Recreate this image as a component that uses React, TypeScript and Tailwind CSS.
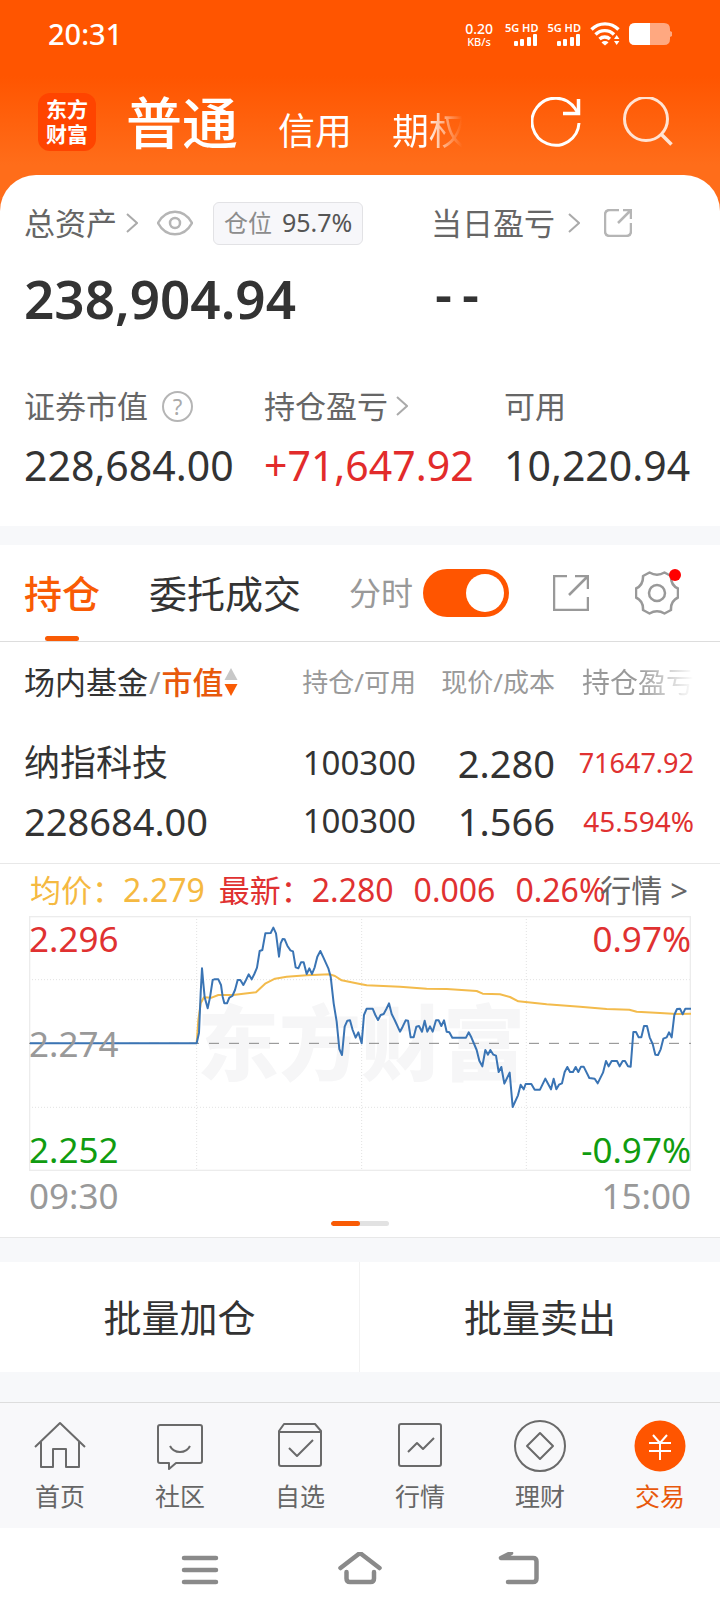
import React, { useState } from "react";

const pricePoints =
  "3,382 503,382 510,350 515,232 519,157 523,202 527,244 536,277 543,244 551,192 556,190 568,190 576,207 581,242 586,262 594,262 601,245 610,240 618,222 626,192 634,192 643,207 651,192 659,175 668,190 676,174 684,155 692,105 700,102 709,52 725,51 733,35 741,52 750,122 755,82 761,69 767,70 775,89 784,103 792,106 800,154 808,157 816,139 824,139 833,174 841,157 849,174 857,154 865,122 874,105 882,122 898,157 905,182 914,262 923,317 931,399 939,417 947,332 955,314 963,313 971,342 980,365 988,349 998,382 1005,297 1013,278 1031,278 1039,297 1047,312 1055,297 1064,294 1072,279 1080,262 1088,294 1097,312 1113,347 1121,332 1130,313 1137,314 1145,364 1154,364 1162,332 1170,330 1179,347 1187,314 1195,347 1203,331 1211,347 1221,313 1229,313 1237,330 1245,313 1253,347 1261,349 1270,365 1311,365 1319,349 1327,364 1343,402 1351,434 1360,451 1369,402 1377,416 1384,402 1393,416 1401,419 1409,468 1417,453 1426,503 1442,470 1451,573 1467,538 1475,506 1484,520 1490,504 1507,504 1517,521 1533,521 1549,488 1566,520 1574,488 1582,520 1590,506 1599,502 1607,468 1615,453 1623,468 1632,468 1640,453 1648,468 1656,452 1664,452 1681,486 1697,488 1706,502 1722,470 1731,435 1739,451 1748,435 1764,435 1772,451 1781,435 1788,435 1797,451 1805,452 1813,348 1821,348 1829,364 1837,364 1845,330 1854,330 1862,364 1871,384 1879,416 1887,417 1895,400 1903,368 1913,364 1920,349 1928,364 1936,297 1944,279 1953,278 1961,295 1969,278 1986,278";

const averagePoints =
  "503,382 508,312 515,262 525,244 548,245 568,237 613,237 643,233 681,229 710,202 738,188 773,182 833,178 903,175 918,180 938,193 993,204 1013,208 1113,212 1193,218 1253,219 1343,225 1361,233 1413,235 1443,243 1468,256 1553,265 1653,272 1733,279 1801,281 1823,287 1893,291 1943,294 1986,293";

const Chevron = () => (
  <svg viewBox="0 0 12 20" className="w-3 h-5 shrink-0" fill="none" stroke="#aaa" strokeWidth="2">
    <path d="M1 1l10 9-10 9" />
  </svg>
);

const Signal = () => (
  <div className="flex flex-col items-end">
    <span className="text-[11px] leading-[12px] font-semibold">5G HD</span>
    <svg viewBox="0 0 24 12" className="w-6 h-3" fill="#fff">
      <rect x="0" y="7" width="4" height="5" rx="1" />
      <rect x="6" y="5" width="4" height="7" rx="1" />
      <rect x="13" y="3" width="4" height="9" rx="1" />
      <rect x="19" y="0" width="4" height="12" rx="1" />
    </svg>
  </div>
);

const StatusBar = () => (
  <div className="flex items-center justify-between h-[68px] pl-12 pr-12 text-white">
    <span className="text-[29px] leading-8 font-medium">20:31</span>
    <div className="flex items-center gap-[9px]">
      <div className="flex flex-col items-center mr-[3px] font-medium">
        <span className="text-[14px] leading-[15px]">0.20</span>
        <span className="text-[11px] leading-[12px]">KB/s</span>
      </div>
      <Signal />
      <Signal />
      <svg viewBox="0 0 30 24" className="w-[30px] h-6" fill="none" stroke="#fff" strokeWidth="3.4">
        <path d="M1.5 7.5a19 19 0 0 1 27 0" />
        <path d="M5.5 12.5a13 13 0 0 1 18.5 0" />
        <path d="M9.5 17a8 8 0 0 1 10.5 0" />
        <path d="M11.5 20.5l3.5 3 3.5-3a5 5 0 0 0-7 0z" fill="#fff" stroke="none" />
        <path d="M24 17l2.700-4 2.700 4zM24 19l2.700 4 2.700-4z" fill="#fff" stroke="none" />
      </svg>
      <svg viewBox="0 0 43 22" className="w-[43px] h-[22px]">
        <path d="M6 0h29q6 0 6 6v2l2 1v4l-2 1v2q0 6-6 6H6q-6 0-6-6V6q0-6 6-6z" fill="#ffa880" />
        <path d="M6 0h15v22H6q-6 0-6-6V6q0-6 6-6z" fill="#fff" />
      </svg>
    </div>
  </div>
);

const Header = () => (
  <header className="flex items-center justify-between h-[107px] pl-[38px] pr-[47px] text-white">
    <div className="flex items-center">
      <div className="flex items-center justify-center size-[58px] rounded-xl bg-[#ff4400] text-[21px] leading-[25px] font-bold">
        东方
        <br />
        财富
      </div>
      <nav className="flex items-end ml-[30px]">
        <a href="#" className="text-[56px] leading-[64px] font-medium">普通</a>
        <a href="#" className="ml-10 text-[37px] leading-[46px]">信用</a>
        <a href="#" className="ml-10 text-[37px] leading-[46px] text-transparent bg-clip-text bg-linear-to-r from-white from-45% to-transparent to-95%">
          期权
        </a>
      </nav>
    </div>
    <div className="flex items-center gap-[42px]">
      <button aria-label="刷新">
        <svg viewBox="0 0 50 50" className="size-[50px]" fill="none" stroke="#fff" strokeWidth="3">
          <path d="M48 26A23.500 23.500 0 1 1 44 11.500l3.500 5.500" />
          <path d="M32 16.500h15.500V2" strokeWidth="3.500" />
        </svg>
      </button>
      <button aria-label="搜索">
        <svg viewBox="0 0 50 50" className="size-[50px]" fill="none" stroke="#ffe3d3" strokeWidth="3">
          <circle cx="23" cy="22" r="21.500" />
          <path d="M38 37l10.500 10.500" strokeWidth="3.500" />
        </svg>
      </button>
    </div>
  </header>
);

const Summary = () => (
  <section className="pb-[35px]">
    <div className="grid grid-cols-[431fr_289fr] pt-[25px]">
      <div className="flex items-center pl-6 h-[46px]">
        <a href="#" className="flex items-center gap-[9px] text-[31px] text-[#666]">
          总资产 <Chevron />
        </a>
        <button aria-label="隐藏金额" className="ml-[19px]">
          <svg viewBox="0 0 36 26" className="w-9 h-[26px]" fill="none" stroke="#b5b5b5" strokeWidth="2.500">
            <path d="M1 13C9-2 27-2 35 13 27 28 9 28 1 13z" />
            <circle cx="18" cy="13" r="5" />
          </svg>
        </button>
        <div className="flex items-center gap-[10px] h-[43px] ml-5 px-[10px] border border-[#e2e2e5] rounded-md bg-[#f7f7fa] text-[24px] whitespace-nowrap">
          <span className="text-[#8c8c8c]">仓位</span>
          <span className="text-[25px] text-[#555]">95.7%</span>
        </div>
      </div>
      <div className="flex items-center h-[46px]">
        <a href="#" className="flex items-center gap-[13px] text-[31px] text-[#666]">
          当日盈亏 <Chevron />
        </a>
        <button aria-label="分享" className="ml-6">
          <svg viewBox="0 0 28 28" className="size-7" fill="none" stroke="#b5b5b5" strokeWidth="2.500">
            <path d="M15 1H6Q1 1 1 6v16q0 5 5 5h16q5 0 5-5v-8" />
            <path d="M14 14L27 1M19 1h8v9" />
          </svg>
        </button>
      </div>
      <p className="pl-6 pt-[26px] text-[53px] leading-[54px] font-semibold text-[#333]">238,904.94</p>
      <p className="flex gap-[10px] pt-5 pl-1 text-[53px] leading-[54px] font-semibold text-[#333]">
        <span>-</span>
        <span>-</span>
      </p>
    </div>
    <div className="grid grid-cols-3 pt-[55px] text-[31px] leading-[50px] text-[#666]">
      <div className="flex items-center gap-[14px] pl-6">
        证券市值
        <button aria-label="说明" className="flex items-center justify-center size-[31px] border-2 border-[#b5b5b5] rounded-full text-[22px] leading-none text-[#aaa]">
          ?
        </button>
      </div>
      <a href="#" className="flex items-center gap-[8px] pl-6">
        持仓盈亏 <Chevron />
      </a>
      <div className="pl-6">可用</div>
    </div>
    <div className="grid grid-cols-3 pt-2 text-[41px] leading-[52px] text-[#333]">
      <span className="pl-6">228,684.00</span>
      <span className="pl-6 text-[#e22b2b]">+71,647.92</span>
      <span className="pl-6">10,220.94</span>
    </div>
  </section>
);

const PositionTabs = () => {
  const [minute, setMinute] = useState(true);

  return (
    <div className="flex items-stretch justify-between h-[97px] pl-6 pr-[41px] border-b border-[#ddd]">
      <div className="flex gap-[49px] text-[38px]">
        <button className="relative font-medium text-[#f95b05]">
          持仓
          <span className="absolute bottom-0 left-1/2 w-[34px] h-[5px] -translate-x-1/2 rounded-full bg-[#f95b05]" />
        </button>
        <button className="text-[#333]">委托成交</button>
      </div>
      <div className="flex items-center">
        <label className="flex items-center gap-[10px] text-[32px] text-[#999]">
          分时
          <input
            type="checkbox"
            checked={minute}
            onChange={(e) => setMinute(e.target.checked)}
            className="appearance-none w-[86px] h-12 p-[5px] rounded-full bg-[#ccc] checked:bg-[#ff5500] before:block before:size-[38px] before:rounded-full before:bg-white checked:before:ml-[38px]"
          />
        </label>
        <button aria-label="导出" className="ml-11">
          <svg viewBox="0 0 36 36" className="size-9" fill="none" stroke="#999" strokeWidth="2.500">
            <path d="M14 1H1v34h34V22" />
            <path d="M16 20L35 1M22 1h13v13" />
          </svg>
        </button>
        <button aria-label="设置" className="relative ml-[46px]">
          <svg viewBox="0 0 44 44" className="size-11" fill="none" stroke="#999" strokeWidth="2.500" strokeLinejoin="round">
            <path d="M14.500 1.500q7.500 4.500 15 0l6.500 3.500q-.500 9 7 12.500v9q-7.500 3.500-7 12.500l-6.500 3.500q-7.500-4.500-15 0L8 39q.500-9-7-12.500v-9Q8.500 14 8 5z" />
            <circle cx="22" cy="22" r="8" />
          </svg>
          <span className="absolute -top-[2px] -right-[2px] size-3 rounded-full bg-[#ff0000]" />
        </button>
      </div>
    </div>
  );
};

const Holdings = () => (
  <table className="w-full table-fixed border-b border-[#e8e8e8] text-right whitespace-nowrap text-[#333]">
    <colgroup>
      <col />
      <col className="w-[139px]" />
      <col className="w-[139px]" />
      <col className="w-[165px]" />
    </colgroup>
    <thead>
      <tr className="h-20 text-[26px] text-[#999]">
        <th className="pl-6 text-left font-normal">
          <button className="flex items-center text-[31px] leading-10 text-[#333]">
            场内基金<span className="px-px text-[#999]">/</span>
            <span className="font-medium text-[#e8590c]">市值</span>
            <svg viewBox="0 0 14 28" className="w-[14px] h-7">
              <path d="M7 0l6.500 12H.500z" fill="#c8c8c8" />
              <path d="M7 28l6.500-12H.500z" fill="#f95b05" />
            </svg>
          </button>
        </th>
        <th className="font-normal">持仓/可用</th>
        <th className="font-normal">现价/成本</th>
        <th className="pr-[26px] font-normal">
          <span className="text-[28px] text-transparent bg-clip-text bg-linear-to-r from-[#999] from-50% to-transparent">
            持仓盈亏
          </span>
        </th>
      </tr>
    </thead>
    <tbody>
      <tr>
        <td className="pl-6 pt-3 pb-[13px] text-left">
          <p className="text-[36px] leading-[58px]">纳指科技</p>
          <p className="text-[38px] leading-[58px]">228684.00</p>
        </td>
        <td className="pt-3 pb-[13px] text-[33px] leading-[58px]">
          <p>100300</p>
          <p>100300</p>
        </td>
        <td className="pt-3 pb-[13px] text-[38px] leading-[58px]">
          <p>2.280</p>
          <p>1.566</p>
        </td>
        <td className="pt-3 pb-[13px] pr-[26px] text-[27px] leading-[58px] text-[#e03131]">
          <p>71647.92</p>
          <p className="text-[28px] leading-[58px]">45.594%</p>
        </td>
      </tr>
    </tbody>
  </table>
);

const Chart = () => (
  <section className="pb-[11px] border-b border-[#e8e8e8]">
    <div className="relative flex items-center h-[52px] pl-[30px] text-[32px] whitespace-nowrap">
      <span className="text-[#f5b941]">
        <span className="text-[31px]">均价：</span>2.279
      </span>
      <span className="flex items-center ml-[14px] text-[#e03131]">
        <span className="text-[31px]">最新：</span>2.280
        <span className="ml-5">0.006</span>
        <span className="ml-5">0.26%</span>
      </span>
      <a href="#" className="absolute right-8 text-[31px] text-[#666]">行情 &gt;</a>
    </div>
    <div className="relative mx-[29px] text-[35px] leading-[34px]">
      <svg viewBox="0 0 1986 765" className="block w-full" fill="none">
        <text x="996" y="475" textAnchor="middle" fill="#f6f6f7" fontSize="246" fontWeight="900">
          东方财富
        </text>
        <path d="M0 191h1986M0 574h1986M503 0v765M998 0v765M1492 0v765" stroke="#e2e2e2" strokeWidth="3" strokeDasharray="3 6" />
        <rect x="2" y="2" width="1982" height="761" stroke="#ececec" strokeWidth="4" />
        <path d="M0 382h1986" stroke="#888" strokeWidth="3" strokeDasharray="30 30" />
        <polyline points={averagePoints} stroke="#f3bb4c" strokeWidth="6" strokeLinejoin="round" />
        <polyline points={pricePoints} stroke="#3a74b4" strokeWidth="6" strokeLinejoin="round" />
      </svg>
      <span className="absolute left-0 top-[6px] text-[#e03131]">2.296</span>
      <span className="absolute left-0 top-1/2 -translate-y-1/2 text-[#999]">2.274</span>
      <span className="absolute left-0 bottom-1 text-[#109c10]">2.252</span>
      <span className="absolute right-0 top-[6px] text-[#e03131]">0.97%</span>
      <span className="absolute right-0 bottom-1 text-[#109c10]">-0.97%</span>
    </div>
    <div className="flex justify-between mx-[29px] pt-[2px] pb-[2px] text-[35px] leading-[46px] text-[#999]">
      <span>09:30</span>
      <span>15:00</span>
    </div>
    <div className="flex w-[58px] h-[5px] mx-auto rounded-full overflow-hidden bg-[#e2e2e2]">
      <span className="w-1/2 rounded-full bg-[#f95b05]" />
    </div>
  </section>
);

const tabs = [
  {
    label: "首页",
    icon: (
      <>
        <path d="M1 26L26 2l25 24" />
        <path d="M7 21v25h12V28h13v18h13V21" />
      </>
    ),
  },
  {
    label: "社区",
    icon: (
      <>
        <path d="M6 4h40q2 0 2 2v34q0 2-2 2H22l-7 6v-6H6q-2 0-2-2V6q0-2 2-2z" />
        <path d="M16 25q3 6 10 6t10-6" />
      </>
    ),
  },
  {
    label: "自选",
    icon: (
      <>
        <path d="M5 10l5-7h31l6 7v33q0 2-2 2H7q-2 0-2-2zM5 11h42" />
        <path d="M15 27l8 8 16-16" />
      </>
    ),
  },
  {
    label: "行情",
    icon: (
      <>
        <rect x="5" y="3" width="42" height="42" rx="2" />
        <path d="M14 31l9-9 6 6 11-11" />
      </>
    ),
  },
  {
    label: "理财",
    icon: (
      <>
        <circle cx="26" cy="25" r="25" />
        <path d="M26 12l13 13-13 13-13-13z" />
      </>
    ),
  },
  {
    label: "交易",
    active: true,
    icon: (
      <>
        <circle cx="26" cy="25" r="25.500" fill="#ff5500" stroke="none" />
        <path d="M19 14l7 8 7-8M15 22h22M15 30h22M26 22v17" stroke="#fff" />
      </>
    ),
  },
];

const TabBar = () => (
  <nav className="grid grid-cols-6 h-[126px] pt-[17px] border-t border-[#ddd] bg-[#f8f8fa]">
    {tabs.map((tab) => (
      <a
        key={tab.label}
        href="#"
        className={`flex flex-col items-center text-[25px] leading-9 ${tab.active ? "text-[#e8590c]" : "text-[#666]"}`}
      >
        <svg viewBox="-1 -1 54 52" className="w-[54px] h-[52px] mb-[6px]" fill="none" stroke="#6a6a6a" strokeWidth="2" strokeLinejoin="round">
          {tab.icon}
        </svg>
        {tab.label}
      </a>
    ))}
  </nav>
);

const SystemNav = () => (
  <div className="flex items-center justify-between h-[84px] px-[178px] bg-white">
    <button aria-label="最近任务">
      <svg viewBox="0 0 44 36" className="w-11 h-9" fill="none" stroke="#8a8a8a" strokeWidth="4.500" strokeLinecap="round">
        <path d="M6 6h32M6 18h32M6 30h32" />
      </svg>
    </button>
    <button aria-label="主屏幕">
      <svg viewBox="0 0 44 36" className="w-11 h-9" fill="none" stroke="#8a8a8a" strokeWidth="4.500" strokeLinecap="round">
        <path d="M2.500 16L22 1l19.500 15" strokeLinejoin="round" />
        <path d="M8.500 20v6.500q0 3.500 3.500 3.500h20.500q3.500 0 3.500-3.500V20" />
      </svg>
    </button>
    <button aria-label="返回">
      <svg viewBox="0 0 44 36" className="w-11 h-9" fill="none" stroke="#8a8a8a" strokeWidth="4.500" strokeLinecap="round" strokeLinejoin="round">
        <path d="M13 1L3 6h32q3.500 0 3.500 3.500V26.500q0 3.500-3.500 3.500H10" />
      </svg>
    </button>
  </div>
);

const App = () => {
  return (
    <div className="w-full font-['Noto_Sans','Noto_Sans_CJK_SC',sans-serif] bg-[#f7f8fa]">
      <div className="bg-[#ff6d1a] bg-[linear-gradient(#ff5500_0,#ff5500_76px,#ff6d1a_165px)]">
        <StatusBar />
        <Header />
        <div className="rounded-t-[36px] bg-white">
          <Summary />
        </div>
      </div>

      <main className="mt-[19px] bg-white">
        <PositionTabs />
        <Holdings />
        <Chart />
      </main>

      {/* Batch actions */}
      <div className="grid grid-cols-2 h-[110px] mt-6 mb-[30px] bg-white text-[38px] text-[#333]">
        <button className="border-r border-[#f2f2f2]">批量加仓</button>
        <button>批量卖出</button>
      </div>

      <TabBar />
      <SystemNav />
    </div>
  );
};

export default App;
